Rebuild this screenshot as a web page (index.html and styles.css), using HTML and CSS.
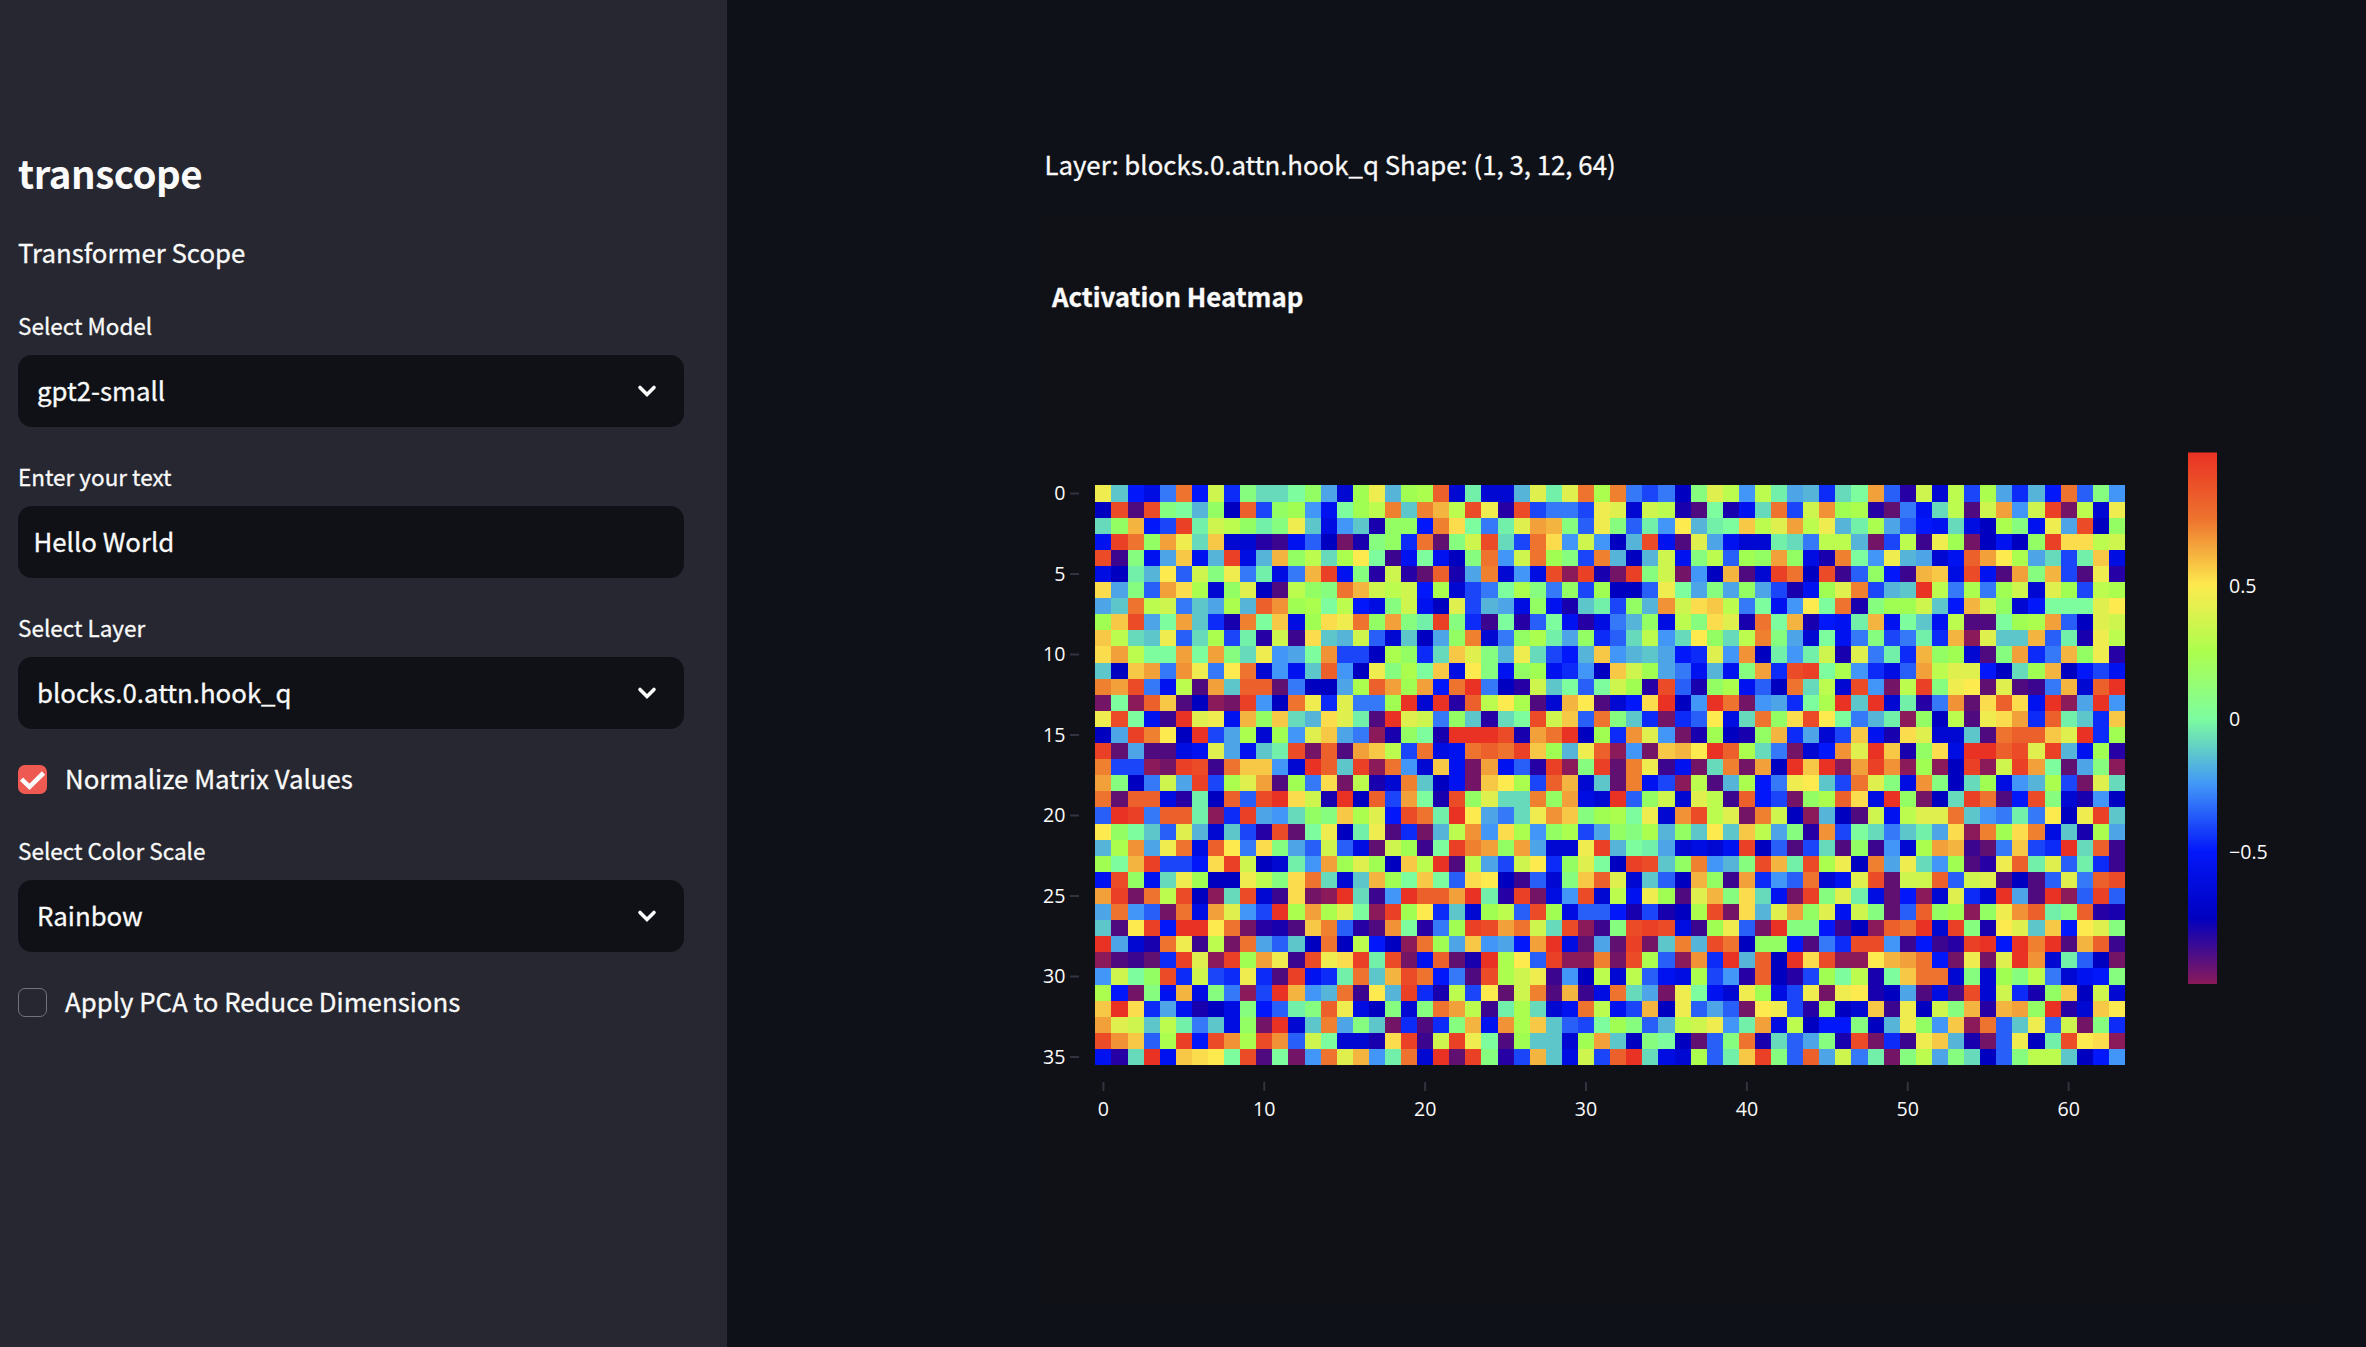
FILE: index.html
```html
<!DOCTYPE html>
<html lang="en">
<head>
<meta charset="utf-8">
<title>transcope</title>
<link rel="stylesheet" href="styles.css">
</head>
<body>
<div class="app">
  <aside class="sidebar">
    <h1 class="brand">transcope</h1>
    <p class="tagline">Transformer Scope</p>
    <div class="field">
      <label class="field-label">Select Model</label>
      <div class="control"><span>gpt2-small</span>
        <svg class="chevron" viewBox="0 0 20 16"><path d="M3 4.5l7 7 7-7"/></svg></div>
    </div>
    <div class="field">
      <label class="field-label">Enter your text</label>
      <div class="control control-input"><span>Hello World</span></div>
    </div>
    <div class="field">
      <label class="field-label">Select Layer</label>
      <div class="control"><span>blocks.0.attn.hook_q</span>
        <svg class="chevron" viewBox="0 0 20 16"><path d="M3 4.5l7 7 7-7"/></svg></div>
    </div>
    <div class="check">
      <span class="box box-on"><svg viewBox="0 0 29 29"><path d="M3.5 14.2l8 7.6L25.5 8"/></svg></span>
      <span>Normalize Matrix Values</span>
    </div>
    <div class="field">
      <label class="field-label">Select Color Scale</label>
      <div class="control"><span>Rainbow</span>
        <svg class="chevron" viewBox="0 0 20 16"><path d="M3 4.5l7 7 7-7"/></svg></div>
    </div>
    <div class="check">
      <span class="box"></span>
      <span>Apply PCA to Reduce Dimensions</span>
    </div>
  </aside>
  <main class="main">
    <p class="layer-info">Layer: blocks.0.attn.hook_q Shape: (1, 3, 12, 64)</p>
    <section class="chart">
      <h2 class="chart-title">Activation Heatmap</h2>
      <svg class="plot" width="1275" height="760" viewBox="1043 380 1275 760">
        <defs>
          <linearGradient id="rainbow" x1="0" y1="1" x2="0" y2="0">
            <stop offset="0" stop-color="#8a1a59"/>
            <stop offset=".125" stop-color="#0000c0"/>
            <stop offset=".25" stop-color="#0318fa"/>
            <stop offset=".375" stop-color="#4196f8"/>
            <stop offset=".5" stop-color="#7dfd9e"/>
            <stop offset=".625" stop-color="#acfe4e"/>
            <stop offset=".75" stop-color="#fdea4e"/>
            <stop offset=".875" stop-color="#ee732e"/>
            <stop offset="1" stop-color="#e93223"/>
          </linearGradient>
        </defs>
        <g id="cells" shape-rendering="crispEdges"></g>
        <g id="axes" class="axis"></g>
        <rect x="2188" y="452.5" width="29" height="531.5" fill="url(#rainbow)"/>
        <g class="axis">
          <text x="2229" y="592.5">0.5</text>
          <text x="2229" y="725.5">0</text>
          <text x="2229" y="858.5">−0.5</text>
        </g>
      </svg>
    </section>
  </main>
</div>
<script src="heatmap.js"></script>
</body>
</html>
```
FILE: styles.css
```css
* { box-sizing: border-box; }
body {
  margin: 0;
  background: #0e1117;
  color: #fafafa;
  font-family: "Noto Sans CJK JP", "Noto Sans", sans-serif;
  font-size: 25.8px;
  line-height: 46px;
  -webkit-text-stroke: 0.3px #fafafa;
}
h1, h2, p { margin: 0; }
.app { display: flex; width: 2366px; height: 1347px; overflow: hidden; }
.sidebar {
  width: 727px;
  flex: none;
  padding: 149px 43px 0 18px;
  background: #262730;
}
.brand {
  font-size: 38.4px;
  font-weight: 700;
  line-height: 46px;
  letter-spacing: -0.45px;
  -webkit-text-stroke: 0;
}
.tagline { margin-top: 34px; }
.field { margin-top: 31px; }
.tagline + .field { margin-top: 32px; }
.field-label { display: block; font-size: 22.5px; line-height: 36px; margin-bottom: 12px; }
.control {
  display: flex;
  justify-content: space-between;
  height: 72px;
  padding: 0 27px 0 19px;
  border-radius: 14px;
  background: #0f1116;
  line-height: 69px;
}
.control-input { padding-left: 15.5px; }
.chevron {
  width: 20px;
  height: 16px;
  margin-top: 28px;
  fill: none;
  stroke: #fafafa;
  stroke-width: 3.6;
  stroke-linecap: round;
}
.check { display: flex; gap: 18px; margin-top: 26px; }
.box {
  flex: none;
  width: 29px;
  height: 29px;
  margin-top: 10px;
  border: 1.5px solid #72737b;
  border-radius: 7px;
}
.box-on { border: 0; background: #ee5a52; }
.box-on svg { display: block; fill: none; stroke: #fafafa; stroke-width: 4.6; }
.main { flex: 1; padding: 141px 0 0 316px; }
.layer-info { margin-left: 1.5px; }
.chart { width: 1275px; height: 1089px; margin-top: 28px; background: #101116; }
.chart-title {
  padding: 58px 0 0 9px;
  height: 165px;
  font-size: 25.8px;
  font-weight: 700;
  line-height: 46px;
}
.plot { display: block; }
.axis text {
  font-family: "Open Sans", sans-serif;
  font-size: 19.6px;
  fill: #fafafa;
}
.axis line { stroke: #31333f; stroke-width: 2; }
.axis .middle { text-anchor: middle; }
.axis .end { text-anchor: end; }
```
FILE: heatmap.js
```js
// Activation values quantised to letters; each letter indexes one shade of the color scale.
const letters = "abcdefghijklmnopqrstuvwxyzABCDEFGHIJKLMNOPQ";
const shades = ("8a1a59 731466 601070 500a80 3c0590 2600a4 1800ae 0000c0 0008d2 000de2 0012f0 " +
  "0318fa 0c2af8 1b45f8 285ff8 3679f8 4196f8 4da5e8 55b4d8 5dc6ca 68dabc 72f0aa 7dfd9e 86fd7e " +
  "92fe64 a0fe52 acfe4e bcfc4e cdf54e deef4e eeec4e fdea4e fadc4c f6c846 f4b440 f1a03a f09235 " +
  "ef8030 ee732e ec602b eb4c27 ea4025 e93223").split(" ");

// Tiles of 16 columns by 18 rows, left to right, top half then bottom half.
const tiles = [
`EtljpMlCmxuuwyri
hOdOxwsyhNnyzqkw
uyIlnPvCByvxEtjq
kPMyJEuHiifekohb
OexkrHksPjsIyBuA
jhvsFoCxEpvjpIPk
GrxoJGAiyDhdByxM
rtMBCptrAsNKzAwB
zHOrwJtmgLwHjzGE
HButEouAnvfCeGts
GJBwwJwJxuEqrwKn
thHJpKEpFMiqktNq
LJOpkBdJtNNcphhr
bwaNHdhabPqhMEmD
EOwkeQDEkIyHusGD
hrPLFhQnrAizqDHr
PcrddjkDrktvObNd
LnnabPOeMHHqiQNt`,
`zEszANiviisDvDMA
zBLtLIBOEfOnppnE
tgyylLGwpvDJIxoE
gxymMcxCOunMGqCq
FwekwkhxMqCMzxnL
xfCfcNgrLiqjOaPg
ICBClAinpwAxpynz
ljxCkhDnsrjykgtv
MyJxvPxmewfowkfj
CoithryLipyAvrym
nhAymuHDxsEunlsH
hExAwHjFxkyzkmqh
ANJzJlMQphfCtwow
ppzQiQfNBFAdiIFd
vdQDCpytfuwOCHoM
pagywgQQQOgJMQhz
JHBnMjkMNMPHzsEN
PaMqiHkbJkofPaxP`,
`LpnphxDBqBvrsmuw
DiCBgdwgkuMnCKzA
xovqFsvwHBDJBEsv
hsOkdDrkiivupBBs
shsCkxBozyJyjgLw
bPxCbqhIdiPMhOeo
hhoEwrxryrngkzDL
nysKCGHBpwkqFwMg
psyjBxGDgMwIglkv
ouBquFyuBLxriwkp
qstrlmDqKhvqvCgD
HCzrpkskxJmOPwAq
CzfOogyAkohMuBiO
ilGQhqQMbqrmwAQt
xtmbmoFjuMyGOFwp
mKDqbgzhgyImrinH
aqbHIFQNAupbilKD
cLEekbuLbJhQHQaJ`,
`JofCiBnArmslMoxq
fcpkuBdCJqCPbBiE
ArolkujhAxkErOhy
bnBeEzbhkhyPGGBC
qEsrikNJFArunvHj
yleIHjOkdJxIndEf
nstQBpApzCiDznBA
xzzCtlICyilwwwDF
IkwtkBddwzAJohDC
xnpvmIaDttIovgEB
pvmIyzidxJmpIyEf
mjoJBDDlhuzIhlnk
qbBPxEFcDdepIiNQ
QivfpKcGNGkQarQq
svayhBdEGJmNvtmH
kgGDiitdMNNHDQmz
QHgyGjQQNODPskzf
PKazahPaCPJwcrxa`,
`JxhpCrPnADJdzpGb
McNNjfvhNoOQGCgQ
oQPpNNvamPrquyxH
FywtoDsitnfOcwEh
sAKrEMjNFpGxroCo
zwIPnnlGPChivqJz
kOykuEzhhEBxGMui
JPbMBOhauOieGbaQ
rMqobMjJDqnQAJAD
tdFPlQQFMbfgdHLo
QrigMEeBbMrothMh
adecmPDaPzJEeOEG
qCwyOmCnmEmdPkmv
AlbxkIjxpanQIqsM
HQGmrkghjxlovxNE
JDCtBvptjybQitLr
OKHoAPlOKAOKoCwi
kfuQkHGFwOdwbqMD`,
`BgiLthkbHFAnNIit
hNnJwgOyDuuLyJji
ADlOMvQFrpuEKHxz
vEdmbsBKqGAqyAnr
jcCzewPLJyJriiEP
DzhHBQdBrnCFmyDw
tIzwHwoGFheoixHN
ueqQNNJQvfPbjqOi
waPzFmtizBoOzjoo
fdKwfpzPOJMCuOae
BlhaMzrHqrlJQjcr
PvObkNcgQAFoPaaL
MtIOMlpdOACEeqhB
eFsPmgBnFcCLdIej
jhxixMJBevAuikMB
xtbmdmxIkKAHtonw
igGPeCPEwdzttizJ
IqvMiQcPxfnItjCn`,
`cLknaBdsAlpEFtnM
QoyCiDBeNlnbyANG
AwEiKOBDbLChashd
yxAsytFtHBrxfKnw
swvrijikPhodnudy
hPOtyLqsxOIvOAEh
DitohIyeJmqoMikD
BkEzdDIxGukbPxDv
lgnghAObGsDJyDkC
xOPOjezEobQxxleh
cPbtLsOMhyyldpmO
bOAoaKmQsNhQGOaa
iBokjAnqfNhfnzwB
MurbEwkiEzjnEbEF
knIhEorobFEnfAhi
zxosBCEqvJjBhllx
thxwhcoxMguorxgO
NQujiAovHPxoNrCp`,
`DxjKxhuzjqsAnbDu
jQybhuPMdlOxigqh
CkBDDMtqpvpFhEPt
uptvrGaLzGLjtgAr
eqiAJIecpHnmQuNe
LrEuqzdfENvDovme
OcCCNoCDdhdoDpNO
jclaiDmiQrdQaoPo
xcoNyzayEKNvxNfg
aNMQiPxgFDtHlFDx
OqelefPQlQLQdINe
FIJMlbEbDQKivohb
gwHMMixizxBpiklx
ghrdjdOiCmgyHhCi
HeEhCxIfIJyQfiHF
hsEyqHaMotEoCbxm
bmeEHsgboEhvOFGa
vbxBrxuhoxBBthlq`
].map(t => t.split("\n"));

const NS = "http://www.w3.org/2000/svg";
const add = (parent, name, attrs, text) => {
  const el = document.createElementNS(NS, name);
  for (const key in attrs) el.setAttribute(key, attrs[key]);
  if (text !== undefined) el.textContent = text;
  parent.appendChild(el);
};
const X0 = 1095.87, DX = 16.087, Y0 = 485.95, DY = 16.1;
const cx = i => Math.floor(X0 + DX * i);
const cy = i => Math.floor(Y0 + DY * i);

const cells = document.getElementById("cells");
for (let r = 0; r < 36; r++) {
  for (let c = 0; c < 64; c++) {
    const letter = tiles[(r < 18 ? 0 : 4) + (c >> 4)][r % 18][c % 16];
    add(cells, "rect", {
      x: cx(c), y: cy(r), width: cx(c + 1) - cx(c), height: cy(r + 1) - cy(r),
      fill: "#" + shades[letters.indexOf(letter)]
    });
  }
}

const axes = document.getElementById("axes");
for (let v = 0; v <= 35; v += 5) {
  const y = Y0 + DY * (v + 0.5) - 0.5;
  add(axes, "line", { x1: 1070, x2: 1079, y1: y, y2: y });
  add(axes, "text", { x: 1065.5, y: y + 6.8, class: "end" }, v);
}
for (let v = 0; v <= 60; v += 10) {
  const x = X0 + DX * (v + 0.5) - 0.5;
  add(axes, "line", { x1: x, x2: x, y1: 1082, y2: 1091 });
  add(axes, "text", { x: x, y: 1115.5, class: "middle" }, v);
}
```
